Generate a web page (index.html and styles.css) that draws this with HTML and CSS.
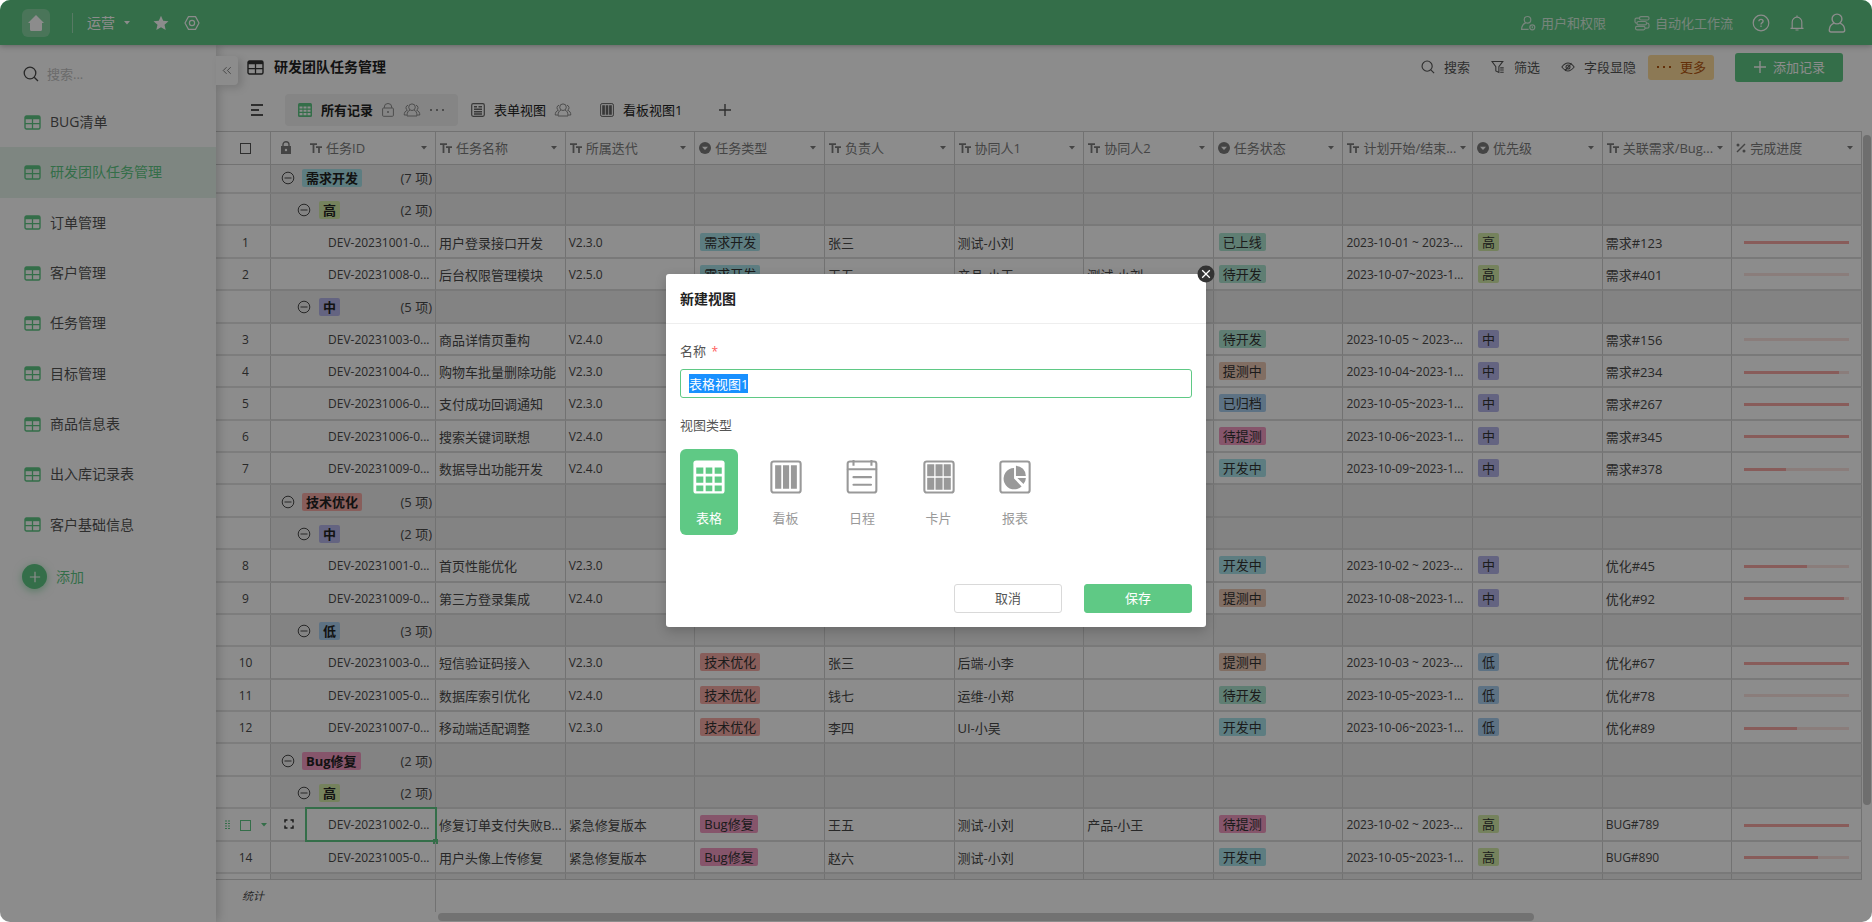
FILE: index.html
```html
<!DOCTYPE html>
<html lang="zh-CN">
<head>
<meta charset="utf-8">
<title>研发团队任务管理</title>
<link rel="stylesheet" href="styles.css">
</head>
<body>
<svg class="sprite" aria-hidden="true">
  <symbol id="i-table" viewBox="0 0 17 15"><rect x="1" y="1" width="15" height="13" rx="1.5" fill="none" stroke="currentColor" stroke-width="1.4"/><path d="M1 1h15v3.200H1z" fill="currentColor"/><path d="M8.500 4v10M1 8.700h15" stroke="currentColor" stroke-width="1.300"/></symbol>
  <symbol id="i-search" viewBox="0 0 16 16"><circle cx="7" cy="7" r="5.800" fill="none" stroke="currentColor" stroke-width="1.300"/><path d="M11.200 11.200L15 15" stroke="currentColor" stroke-width="1.300"/></symbol>
  <symbol id="i-home" viewBox="0 0 16 16"><path d="M8 0L0 8h2v6.500Q2 16 3.500 16h9q1.500 0 1.500-1.500V8h2z" fill="currentColor"/></symbol>
  <symbol id="i-star" viewBox="0 0 16 16"><path d="M8 .8l2.200 4.900 5.300.5-4 3.600 1.200 5.300L8 12.300l-4.700 2.800 1.200-5.300-4-3.600 5.300-.5z" fill="currentColor"/></symbol>
  <symbol id="i-hex" viewBox="0 0 16 16"><path d="M4.500 1.600h7L15 8l-3.500 6.400h-7L1 8z" fill="none" stroke="currentColor" stroke-width="1.200" stroke-linejoin="round"/><circle cx="8" cy="8" r="2.600" fill="none" stroke="currentColor" stroke-width="1.200"/></symbol>
  <symbol id="i-userlock" viewBox="0 0 16 16"><g fill="none" stroke="currentColor" stroke-width="1.200"><circle cx="7.500" cy="4.800" r="3.300"/><path d="M5.800 7.600C3.500 8.800 1.600 10.500 1.600 14.400h7"/><circle cx="12.300" cy="12.300" r="2.500"/><path d="M12.300 11.300v2"/></g></symbol>
  <symbol id="i-flow" viewBox="0 0 16 16"><g fill="none" stroke="currentColor" stroke-width="1.200"><rect x="5.500" y="1.600" width="9.500" height="3.400" rx="1.500"/><rect x="3" y="6.500" width="9.500" height="3.400" rx="1.500"/><rect x="1.500" y="11.400" width="9.500" height="3.400" rx="1.500"/><path d="M5.500 3.200H2.500q-1.500 0-1.500 1.500v2q0 1.500 2 1.500M12.500 8.200h.5q2 0 2 1.500v2q0 1.500-2 1.500h-2"/></g></symbol>
  <symbol id="i-help" viewBox="0 0 18 18"><circle cx="9" cy="9" r="7.800" fill="none" stroke="currentColor" stroke-width="1.200"/><path d="M6.900 7.300q0-2 2.100-2t2.100 1.900q0 1-1.200 1.700-.9.500-.9 1.600M9 11.600v1.400" fill="none" stroke="currentColor" stroke-width="1.300"/></symbol>
  <symbol id="i-bell" viewBox="0 0 16 16"><path d="M1.500 13.300h13M3.200 13.300V7a4.800 4.800 0 0 1 9.600 0v6.300M8 .5v1.700M6.500 15h3" fill="none" stroke="currentColor" stroke-width="1.200"/></symbol>
  <symbol id="i-person" viewBox="0 0 18 20"><g fill="none" stroke="currentColor" stroke-width="1.400"><circle cx="9" cy="6" r="4.900"/><path d="M6 10.200C3 11.300 1.500 13.500 1.300 17q0 2 1.700 2h12q1.700 0 1.700-2C16.500 13.500 15 11.300 12 10.200"/></g></symbol>
  <symbol id="i-collapse" viewBox="0 0 12 10"><path d="M5.500 1L1.500 5l4 4M10.500 1l-4 4 4 4" fill="none" stroke="currentColor" stroke-width="1.100"/></symbol>
  <symbol id="i-menu" viewBox="0 0 14 14"><path d="M1 2h12M1 7h8M1 12h12" stroke="currentColor" stroke-width="2"/></symbol>
  <symbol id="i-gridfill" viewBox="0 0 14 14"><rect width="14" height="14" rx="1.500" fill="currentColor"/><path d="M1.500 3.500h3v2h-3zM5.500 3.500h3v2h-3zM9.500 3.500h3v2h-3zM1.500 6.700h3v2h-3zM5.500 6.700h3v2h-3zM9.500 6.700h3v2h-3zM1.500 10h3v2.300h-3zM5.500 10h3v2.300h-3zM9.500 10h3v2.300h-3z" fill="#fff"/></symbol>
  <symbol id="i-lockline" viewBox="0 0 14 14"><rect x="1.600" y="5" width="10.800" height="8.300" rx="1" fill="none" stroke="currentColor"/><path d="M3.300 5V4a3.700 3.500 0 0 1 7.400 0v1" fill="none" stroke="currentColor"/><circle cx="7" cy="9" r="1" fill="currentColor"/></symbol>
  <symbol id="i-people" viewBox="0 0 18 14"><g fill="none" stroke="currentColor"><circle cx="9" cy="4.200" r="3.300"/><path d="M5 2.200a2.700 2.700 0 0 0-.6 5C2.200 8 1.200 9.600 1.200 12h2.500M13 2.200a2.700 2.700 0 0 1 .6 5c2.200.8 3.200 2.400 3.200 4.800h-2.500M7 7c-2 .8-3 2.500-3 6h10c0-3.500-1-5.200-3-6"/></g></symbol>
  <symbol id="i-dots" viewBox="0 0 16 4"><path d="M1 1h2v2H1zM7 1h2v2H7zM13 1h2v2h-2z" fill="currentColor"/></symbol>
  <symbol id="i-form" viewBox="0 0 14 14"><rect x=".7" y=".7" width="12.600" height="12.600" rx="1.500" fill="none" stroke="currentColor" stroke-width="1.200"/><path d="M3 3.700h3M7.500 3.700H11M3 6.200h8M3 8.700h8M3 11h8" stroke="currentColor" stroke-width="1.400"/></symbol>
  <symbol id="i-kanban" viewBox="0 0 14 14"><rect x=".6" y=".6" width="12.800" height="12.800" rx="1.500" fill="none" stroke="currentColor" stroke-width="1"/><path d="M2.200 2.200h2.700v9.600H2.200zM5.700 2.200h2.600v9.600H5.700zM9.100 2.200h2.700v9.600H9.100z" fill="currentColor"/></symbol>
  <symbol id="i-plus" viewBox="0 0 14 14"><path d="M7 1v12M1 7h12" stroke="currentColor" stroke-width="1.400"/></symbol>
  <symbol id="i-filter" viewBox="0 0 16 16"><path d="M1 1.600h12.500L9 7.500v6.800l-3.500-1.700V7.500zM10.500 9h4M10.500 11.500h4M10.500 14h4" fill="none" stroke="currentColor" stroke-width="1.200"/></symbol>
  <symbol id="i-eye" viewBox="0 0 16 14"><path d="M1 7q7-9 14 0-7 9-14 0zM4.500 11.500L12 2.500" fill="none" stroke="currentColor" stroke-width="1.200"/><circle cx="8" cy="7" r="2.300" fill="none" stroke="currentColor" stroke-width="1.200"/></symbol>
  <symbol id="i-lock" viewBox="0 0 12 14"><path d="M1 5h10v8H1z" fill="currentColor"/><path d="M3 5V3.500a3 2.800 0 0 1 6 0V5" fill="none" stroke="currentColor" stroke-width="1.400"/><circle cx="6" cy="9" r="1.200" fill="#fff"/></symbol>
  <symbol id="i-text" viewBox="0 0 12 10"><path d="M0 1.200h7M3.500 1.200V10M6 4.200h6M9 4.200V10" fill="none" stroke="currentColor" stroke-width="1.800"/></symbol>
  <symbol id="i-select" viewBox="0 0 12 12"><circle cx="6" cy="6" r="6" fill="currentColor"/><path d="M3 4.800h6L6 8z" fill="#fff"/></symbol>
  <symbol id="i-percent" viewBox="0 0 10 10"><path d="M9 1L1 9" stroke="currentColor" stroke-width="1.400"/><circle cx="2" cy="2" r="1.500" fill="currentColor"/><circle cx="8" cy="8" r="1.500" fill="currentColor"/></symbol>
  <symbol id="i-caret" viewBox="0 0 6 4"><path d="M0 0h6L3 3.500z" fill="currentColor"/></symbol>
  <symbol id="i-minus" viewBox="0 0 14 14"><circle cx="7" cy="7" r="5.800" fill="none" stroke="currentColor"/><path d="M3.500 7h7" stroke="currentColor"/></symbol>
  <symbol id="i-expand" viewBox="0 0 10 10"><path d="M1 3.500V1h2.500M6.500 1H9v2.500M9 6.500V9H6.500M3.500 9H1V6.500" fill="none" stroke="currentColor" stroke-width="1.500"/></symbol>
  <symbol id="i-drag" viewBox="0 0 5 10"><path d="M0 1h2M3 1h2M0 3.500h2M3 3.500h2M0 6h2M3 6h2M0 8.500h2M3 8.500h2" stroke="currentColor"/></symbol>
  <symbol id="i-close" viewBox="0 0 18 18"><circle cx="9" cy="9" r="8.500" fill="#333"/><path d="M5.200 5.200l7.600 7.600M12.800 5.200l-7.600 7.600" stroke="#fff" stroke-width="1.300"/></symbol>
  <symbol id="v-grid" viewBox="0 0 34 36"><rect x=".5" y=".5" width="33" height="35" rx="3" fill="currentColor"/><path d="M3.500 8h7.500v6.500H3.500zM13.500 8h7v6.500h-7zM23 8h7.500v6.500H23zM3.500 17.500h7.500V24H3.500zM13.500 17.500h7V24h-7zM23 17.500h7.500V24H23zM3.500 27h7.500v6H3.500zM13.500 27h7v6h-7zM23 27h7.500v6H23z" fill="#5fc985"/></symbol>
  <symbol id="v-kanban" viewBox="0 0 34 36"><rect x="1.500" y="1.500" width="31" height="33" rx="2.500" fill="none" stroke="currentColor" stroke-width="2.200"/><path d="M5.500 5.500h6.500v25H5.500zM13.800 5.500h6.500v25h-6.500zM22.200 5.500h6.300v25h-6.300z" fill="currentColor"/></symbol>
  <symbol id="v-cal" viewBox="0 0 34 36"><rect x="1.800" y="1.500" width="30.400" height="33" rx="2.500" fill="none" stroke="currentColor" stroke-width="2.200"/><path d="M2 9.800h30M8 18.200h18.500M8 26.200h18.500" fill="none" stroke="currentColor" stroke-width="2.300" stroke-linecap="round"/><path d="M8 0v6M27 0v6" stroke="currentColor" stroke-width="2.200"/></symbol>
  <symbol id="v-card" viewBox="0 0 34 36"><rect x="1.500" y="1.500" width="31" height="33" rx="2.500" fill="none" stroke="currentColor" stroke-width="2.200"/><path d="M4.500 4.500h7.500v12.800H4.500zM13.300 4.500h7.500v12.800h-7.500zM22 4.500h7.500v12.800H22zM4.500 18.700h7.500v12.800H4.500zM13.300 18.700h7.500v12.800h-7.500zM22 18.700h7.500v12.800H22z" fill="currentColor"/></symbol>
  <symbol id="v-chart" viewBox="0 0 34 36"><rect x="1.500" y="1.500" width="31" height="33" rx="2.500" fill="none" stroke="currentColor" stroke-width="2.200"/><path d="M16 8.500A11.300 11.300 0 1 0 24 28L16 19.500z" fill="currentColor"/><path d="M18 6v11h10.500A11 11 0 0 0 18 6zM19.500 19L26 25.500Q28.500 22.500 28.500 19z" fill="currentColor"/></symbol>
</svg>

<div class="app">
  <header class="topbar">
    <button class="home" aria-label="首页"><svg class="s16"><use href="#i-home"/></svg></button>
    <span class="topbar-divider"></span>
    <button class="app-name">运营 <svg class="caret"><use href="#i-caret"/></svg></button>
    <button aria-label="收藏"><svg class="s16"><use href="#i-star"/></svg></button>
    <button class="gear" aria-label="设置"><svg class="s16"><use href="#i-hex"/></svg></button>
    <div class="topbar-right">
      <button class="soft"><svg class="s16"><use href="#i-userlock"/></svg>用户和权限</button>
      <button class="soft flow"><svg class="s16"><use href="#i-flow"/></svg>自动化工作流</button>
      <button aria-label="帮助"><svg class="s18"><use href="#i-help"/></svg></button>
      <button class="bell" aria-label="通知"><svg class="s16"><use href="#i-bell"/></svg></button>
      <button class="me" aria-label="个人中心"><svg class="s20"><use href="#i-person"/></svg></button>
    </div>
  </header>

  <div class="body">
    <aside class="sidebar">
      <label class="side-search"><svg class="s16"><use href="#i-search"/></svg><input type="text" placeholder="搜索..." aria-label="搜索"></label>
      <nav>
        <a href="#"><svg class="tbl"><use href="#i-table"/></svg>BUG清单</a>
        <a href="#" class="on"><svg class="tbl"><use href="#i-table"/></svg>研发团队任务管理</a>
        <a href="#"><svg class="tbl"><use href="#i-table"/></svg>订单管理</a>
        <a href="#"><svg class="tbl"><use href="#i-table"/></svg>客户管理</a>
        <a href="#"><svg class="tbl"><use href="#i-table"/></svg>任务管理</a>
        <a href="#"><svg class="tbl"><use href="#i-table"/></svg>目标管理</a>
        <a href="#"><svg class="tbl"><use href="#i-table"/></svg>商品信息表</a>
        <a href="#"><svg class="tbl"><use href="#i-table"/></svg>出入库记录表</a>
        <a href="#"><svg class="tbl"><use href="#i-table"/></svg>客户基础信息</a>
      </nav>
      <button class="side-add"><span class="side-plus"><svg class="s12"><use href="#i-plus"/></svg></span>添加</button>
      <button class="collapse" aria-label="收起"><svg><use href="#i-collapse"/></svg></button>
    </aside>

    <main class="main">
      <div class="titlebar">
        <svg class="tbl"><use href="#i-table"/></svg>
        <h1>研发团队任务管理</h1>
        <div class="tools">
          <button><svg class="s14"><use href="#i-search"/></svg>搜索</button>
          <button><svg class="s14"><use href="#i-filter"/></svg>筛选</button>
          <button class="fields"><svg class="s14"><use href="#i-eye"/></svg>字段显隐</button>
          <button class="more"><svg class="dots"><use href="#i-dots"/></svg>更多</button>
          <button class="add"><svg class="s14"><use href="#i-plus"/></svg>添加记录</button>
        </div>
      </div>

      <div class="tabs">
        <button class="menu" aria-label="视图列表"><svg class="s14"><use href="#i-menu"/></svg></button>
        <button class="tab on"><svg class="s14 green"><use href="#i-gridfill"/></svg><span>所有记录</span><svg class="s14 faint"><use href="#i-lockline"/></svg><svg class="people faint"><use href="#i-people"/></svg><svg class="dots faint"><use href="#i-dots"/></svg></button>
        <button class="tab"><svg class="s14"><use href="#i-form"/></svg><span>表单视图</span><svg class="people faint"><use href="#i-people"/></svg></button>
        <button class="tab third"><svg class="s14"><use href="#i-kanban"/></svg><span>看板视图1</span></button>
        <button class="newtab" aria-label="新建视图"><svg class="s14"><use href="#i-plus"/></svg></button>
      </div>

      <div class="sheet">
        <div class="rows">
          <table>
            <colgroup><col class="c-num"><col class="c-id"><col span="11"></colgroup>
            <thead>
              <tr>
                <th class="num"><input type="checkbox" aria-label="全选"></th>
                <th><div class="h h-id"><svg class="lock"><use href="#i-lock"/></svg><svg class="tt"><use href="#i-text"/></svg>任务ID<svg class="caret"><use href="#i-caret"/></svg></div></th>
                <th><div class="h"><svg class="tt"><use href="#i-text"/></svg>任务名称<svg class="caret"><use href="#i-caret"/></svg></div></th>
                <th><div class="h"><svg class="tt"><use href="#i-text"/></svg>所属迭代<svg class="caret"><use href="#i-caret"/></svg></div></th>
                <th><div class="h"><svg class="s12"><use href="#i-select"/></svg>任务类型<svg class="caret"><use href="#i-caret"/></svg></div></th>
                <th><div class="h"><svg class="tt"><use href="#i-text"/></svg>负责人<svg class="caret"><use href="#i-caret"/></svg></div></th>
                <th><div class="h"><svg class="tt"><use href="#i-text"/></svg>协同人1<svg class="caret"><use href="#i-caret"/></svg></div></th>
                <th><div class="h"><svg class="tt"><use href="#i-text"/></svg>协同人2<svg class="caret"><use href="#i-caret"/></svg></div></th>
                <th><div class="h"><svg class="s12"><use href="#i-select"/></svg>任务状态<svg class="caret"><use href="#i-caret"/></svg></div></th>
                <th><div class="h"><svg class="tt"><use href="#i-text"/></svg>计划开始/结束...<svg class="caret"><use href="#i-caret"/></svg></div></th>
                <th><div class="h"><svg class="s12"><use href="#i-select"/></svg>优先级<svg class="caret"><use href="#i-caret"/></svg></div></th>
                <th><div class="h"><svg class="tt"><use href="#i-text"/></svg>关联需求/Bug...<svg class="caret"><use href="#i-caret"/></svg></div></th>
                <th><div class="h"><svg class="s10"><use href="#i-percent"/></svg>完成进度<svg class="caret"><use href="#i-caret"/></svg></div></th>
              </tr>
            </thead>
            <tbody>
              <tr class="group first"><td class="num"></td><td><div class="g"><svg class="s14"><use href="#i-minus"/></svg><b class="tag cyan">需求开发</b><span>(7 项)</span></div></td><td></td><td></td><td></td><td></td><td></td><td></td><td></td><td></td><td></td><td></td><td></td></tr>
              <tr class="group"><td class="num"></td><td><div class="g sub"><svg class="s14"><use href="#i-minus"/></svg><b class="tag lime">高</b><span>(2 项)</span></div></td><td></td><td></td><td></td><td></td><td></td><td></td><td></td><td></td><td></td><td></td><td></td></tr>
              <tr><td class="num">1</td><td class="id">DEV-20231001-0...</td><td>用户登录接口开发</td><td class="lat">V2.3.0</td><td><span class="tag cyan">需求开发</span></td><td>张三</td><td>测试-小刘</td><td></td><td><span class="tag mint">已上线</span></td><td class="lat">2023-10-01 ~ 2023-...</td><td><span class="tag lime">高</span></td><td>需求#123</td><td><div class="bar"><i style="width:100%"></i></div></td></tr>
              <tr><td class="num">2</td><td class="id">DEV-20231008-0...</td><td>后台权限管理模块</td><td class="lat">V2.5.0</td><td><span class="tag cyan">需求开发</span></td><td>王五</td><td>产品-小王</td><td>测试-小刘</td><td><span class="tag mint">待开发</span></td><td class="lat">2023-10-07~2023-1...</td><td><span class="tag lime">高</span></td><td>需求#401</td><td><div class="bar"><i style="width:0%"></i></div></td></tr>
              <tr class="group"><td class="num"></td><td><div class="g sub"><svg class="s14"><use href="#i-minus"/></svg><b class="tag violet">中</b><span>(5 项)</span></div></td><td></td><td></td><td></td><td></td><td></td><td></td><td></td><td></td><td></td><td></td><td></td></tr>
              <tr><td class="num">3</td><td class="id">DEV-20231003-0...</td><td>商品详情页重构</td><td class="lat">V2.4.0</td><td></td><td></td><td></td><td></td><td><span class="tag mint">待开发</span></td><td class="lat">2023-10-05 ~ 2023-...</td><td><span class="tag violet">中</span></td><td>需求#156</td><td><div class="bar"><i style="width:0%"></i></div></td></tr>
              <tr><td class="num">4</td><td class="id">DEV-20231004-0...</td><td>购物车批量删除功能</td><td class="lat">V2.3.0</td><td></td><td></td><td></td><td></td><td><span class="tag sand">提测中</span></td><td class="lat">2023-10-04~2023-1...</td><td><span class="tag violet">中</span></td><td>需求#234</td><td><div class="bar"><i style="width:90%"></i></div></td></tr>
              <tr><td class="num">5</td><td class="id">DEV-20231006-0...</td><td>支付成功回调通知</td><td class="lat">V2.3.0</td><td></td><td></td><td></td><td></td><td><span class="tag blue">已归档</span></td><td class="lat">2023-10-05~2023-1...</td><td><span class="tag violet">中</span></td><td>需求#267</td><td><div class="bar"><i style="width:100%"></i></div></td></tr>
              <tr><td class="num">6</td><td class="id">DEV-20231006-0...</td><td>搜索关键词联想</td><td class="lat">V2.4.0</td><td></td><td></td><td></td><td></td><td><span class="tag pink">待提测</span></td><td class="lat">2023-10-06~2023-1...</td><td><span class="tag violet">中</span></td><td>需求#345</td><td><div class="bar"><i style="width:100%"></i></div></td></tr>
              <tr><td class="num">7</td><td class="id">DEV-20231009-0...</td><td>数据导出功能开发</td><td class="lat">V2.4.0</td><td></td><td></td><td></td><td></td><td><span class="tag cyan">开发中</span></td><td class="lat">2023-10-09~2023-1...</td><td><span class="tag violet">中</span></td><td>需求#378</td><td><div class="bar"><i style="width:40%"></i></div></td></tr>
              <tr class="group"><td class="num"></td><td><div class="g"><svg class="s14"><use href="#i-minus"/></svg><b class="tag red">技术优化</b><span>(5 项)</span></div></td><td></td><td></td><td></td><td></td><td></td><td></td><td></td><td></td><td></td><td></td><td></td></tr>
              <tr class="group"><td class="num"></td><td><div class="g sub"><svg class="s14"><use href="#i-minus"/></svg><b class="tag violet">中</b><span>(2 项)</span></div></td><td></td><td></td><td></td><td></td><td></td><td></td><td></td><td></td><td></td><td></td><td></td></tr>
              <tr><td class="num">8</td><td class="id">DEV-20231001-0...</td><td>首页性能优化</td><td class="lat">V2.3.0</td><td></td><td></td><td></td><td></td><td><span class="tag cyan">开发中</span></td><td class="lat">2023-10-02 ~ 2023-...</td><td><span class="tag violet">中</span></td><td>优化#45</td><td><div class="bar"><i style="width:60%"></i></div></td></tr>
              <tr><td class="num">9</td><td class="id">DEV-20231009-0...</td><td>第三方登录集成</td><td class="lat">V2.4.0</td><td></td><td></td><td></td><td></td><td><span class="tag sand">提测中</span></td><td class="lat">2023-10-08~2023-1...</td><td><span class="tag violet">中</span></td><td>优化#92</td><td><div class="bar"><i style="width:95%"></i></div></td></tr>
              <tr class="group"><td class="num"></td><td><div class="g sub"><svg class="s14"><use href="#i-minus"/></svg><b class="tag blue">低</b><span>(3 项)</span></div></td><td></td><td></td><td></td><td></td><td></td><td></td><td></td><td></td><td></td><td></td><td></td></tr>
              <tr><td class="num">10</td><td class="id">DEV-20231003-0...</td><td>短信验证码接入</td><td class="lat">V2.3.0</td><td><span class="tag red">技术优化</span></td><td>张三</td><td>后端-小李</td><td></td><td><span class="tag sand">提测中</span></td><td class="lat">2023-10-03 ~ 2023-...</td><td><span class="tag blue">低</span></td><td>优化#67</td><td><div class="bar"><i style="width:100%"></i></div></td></tr>
              <tr><td class="num">11</td><td class="id">DEV-20231005-0...</td><td>数据库索引优化</td><td class="lat">V2.4.0</td><td><span class="tag red">技术优化</span></td><td>钱七</td><td>运维-小郑</td><td></td><td><span class="tag mint">待开发</span></td><td class="lat">2023-10-05~2023-1...</td><td><span class="tag blue">低</span></td><td>优化#78</td><td><div class="bar"><i style="width:0%"></i></div></td></tr>
              <tr><td class="num">12</td><td class="id">DEV-20231007-0...</td><td>移动端适配调整</td><td class="lat">V2.3.0</td><td><span class="tag red">技术优化</span></td><td>李四</td><td>UI-小吴</td><td></td><td><span class="tag cyan">开发中</span></td><td class="lat">2023-10-06~2023-1...</td><td><span class="tag blue">低</span></td><td>优化#89</td><td><div class="bar"><i style="width:50%"></i></div></td></tr>
              <tr class="group"><td class="num"></td><td><div class="g"><svg class="s14"><use href="#i-minus"/></svg><b class="tag pink">Bug修复</b><span>(2 项)</span></div></td><td></td><td></td><td></td><td></td><td></td><td></td><td></td><td></td><td></td><td></td><td></td></tr>
              <tr class="group"><td class="num"></td><td><div class="g sub"><svg class="s14"><use href="#i-minus"/></svg><b class="tag lime">高</b><span>(2 项)</span></div></td><td></td><td></td><td></td><td></td><td></td><td></td><td></td><td></td><td></td><td></td><td></td></tr>
              <tr><td class="num"><div class="rowtools"><svg class="drag"><use href="#i-drag"/></svg><input type="checkbox" aria-label="选择记录"><svg class="caret"><use href="#i-caret"/></svg></div></td><td class="id picked"><svg class="s10"><use href="#i-expand"/></svg>DEV-20231002-0...</td><td>修复订单支付失败B...</td><td>紧急修复版本</td><td><span class="tag pink">Bug修复</span></td><td>王五</td><td>测试-小刘</td><td>产品-小王</td><td><span class="tag pink">待提测</span></td><td class="lat">2023-10-02 ~ 2023-...</td><td><span class="tag lime">高</span></td><td class="lat">BUG#789</td><td><div class="bar"><i style="width:100%"></i></div></td></tr>
              <tr><td class="num">14</td><td class="id">DEV-20231005-0...</td><td>用户头像上传修复</td><td>紧急修复版本</td><td><span class="tag pink">Bug修复</span></td><td>赵六</td><td>测试-小刘</td><td></td><td><span class="tag cyan">开发中</span></td><td class="lat">2023-10-05~2023-1...</td><td><span class="tag lime">高</span></td><td class="lat">BUG#890</td><td><div class="bar"><i style="width:70%"></i></div></td></tr>
              <tr class="group last"><td class="num"></td><td></td><td></td><td></td><td></td><td></td><td></td><td></td><td></td><td></td><td></td><td></td><td></td></tr>
            </tbody>
          </table>
          <div class="vtrack"><div class="vthumb"></div></div>
        </div>
        <div class="summary">
          <div class="summary-label">统计</div>
          <div class="htrack"><div class="hthumb"></div></div>
        </div>
      </div>
    </main>
  </div>

  <div class="overlay">
    <form class="modal" role="dialog" aria-labelledby="dlg-title">
      <button type="button" class="close" aria-label="关闭"><svg class="s18"><use href="#i-close"/></svg></button>
      <h2 id="dlg-title">新建视图</h2>
      <div class="modal-body">
        <label for="view-name">名称 <span class="req">*</span></label>
        <input id="view-name" type="text" value="表格视图1" autocomplete="off">
        <fieldset>
          <legend>视图类型</legend>
          <div class="types">
            <label><input type="radio" name="type" checked><svg><use href="#v-grid"/></svg>表格</label>
            <label><input type="radio" name="type"><svg><use href="#v-kanban"/></svg>看板</label>
            <label><input type="radio" name="type"><svg><use href="#v-cal"/></svg>日程</label>
            <label><input type="radio" name="type"><svg><use href="#v-card"/></svg>卡片</label>
            <label><input type="radio" name="type"><svg><use href="#v-chart"/></svg>报表</label>
          </div>
        </fieldset>
      </div>
      <div class="actions">
        <button type="button">取消</button>
        <button type="submit" class="save">保存</button>
      </div>
    </form>
  </div>
</div>
<script src="script.js"></script>
</body>
</html>
```

FILE: styles.css
```css
:root {
  --green: #5fc985;
  --line: #cfcfcf;
  --row-line: #dcdcdc;
}
* { box-sizing: border-box; }
body {
  margin: 0;
  background: #fff;
  font: 13px/18px "Open Sans", "Noto Sans CJK SC", sans-serif;
  color: #4a4a4a;
}
button, input {
  font: inherit;
  color: inherit;
  border: 0;
  background: none;
  padding: 0;
  margin: 0;
}
button { display: flex; align-items: center; }
a { color: inherit; text-decoration: none; }
svg { flex: none; display: block; }
.sprite { position: absolute; width: 0; height: 0; }
.s10 { width: 10px; height: 10px; }
.s12 { width: 12px; height: 12px; }
.s14 { width: 14px; height: 14px; }
.s16 { width: 16px; height: 16px; }
.s18 { width: 18px; height: 18px; }
.s20 { width: 20px; height: 20px; }
.tbl { width: 17px; height: 15px; }
.caret { width: 6px; height: 4px; }
.dots { width: 16px; height: 4px; }
.people { width: 18px; height: 14px; }
.green { color: var(--green); }
.faint { color: #8c8c8c; }

.app {
  position: relative;
  display: flex;
  flex-direction: column;
  height: 100vh;
  border-radius: 10px;
  overflow: hidden;
}

/* Top bar */
.topbar {
  display: flex;
  align-items: center;
  flex: none;
  height: 45px;
  padding: 0 25px 0 22px;
  background: var(--green);
  color: #fff;
  box-shadow: 0 1px 6px rgba(0, 0, 0, .3);
  z-index: 2;
}
.home {
  width: 28px;
  height: 28px;
  justify-content: center;
  border-radius: 6px;
  background: rgba(255, 255, 255, .25);
}
.topbar-divider {
  width: 1px;
  height: 20px;
  margin: 0 14px 0 22px;
  background: rgba(255, 255, 255, .4);
}
.app-name { font-size: 14px; gap: 9px; margin-right: 23px; }
.gear { margin-left: 15px; }
.topbar-right { display: flex; align-items: center; margin-left: auto; }
.topbar-right button { gap: 5px; }
.topbar-right .soft { opacity: .75; }
.topbar-right .flow { margin: 0 19px 0 28px; }
.topbar-right .bell { margin: 0 22px 0 19px; }

.body { display: flex; flex: 1; min-height: 0; }

/* Sidebar */
.sidebar {
  position: relative;
  flex: none;
  width: 216px;
  background: #fff;
  box-shadow: 2px 0 10px rgba(0, 0, 0, .2);
  font-size: 14px;
  z-index: 1;
}
.side-search {
  display: flex;
  align-items: center;
  gap: 8px;
  height: 52px;
  padding: 6px 10px 0 23px;
}
.side-search input { width: 140px; font-size: 13px; }
.side-search input::placeholder { color: #c4c4c4; opacity: 1; }
.sidebar nav { display: grid; grid-auto-rows: 1fr; min-height: 453px; }
.sidebar nav a {
  display: flex;
  align-items: center;
  gap: 9px;
  padding-left: 24px;
  color: #555;
}
.sidebar nav svg { color: var(--green); }
.sidebar nav .on { color: var(--green); background: #e6f5ec; }
.side-add { gap: 9px; margin: 14px 0 0 22px; color: var(--green); }
.side-plus {
  display: flex;
  align-items: center;
  justify-content: center;
  width: 25px;
  height: 25px;
  border-radius: 50%;
  color: #fff;
  background: var(--green);
  box-shadow: 0 2px 8px rgba(95, 201, 133, .6);
}
.collapse {
  position: absolute;
  left: 100%;
  top: 11px;
  width: 22px;
  height: 29px;
  justify-content: center;
  color: #777;
  background: #fff;
  border-radius: 0 4px 4px 0;
  box-shadow: 4px 3px 8px rgba(0, 0, 0, .15);
}
.collapse svg { width: 10px; height: 9px; }

/* Title row and tools */
.main { flex: 1; min-width: 0; display: flex; flex-direction: column; background: #fff; }
.titlebar {
  display: flex;
  align-items: center;
  gap: 10px;
  height: 44px;
  padding: 0 29px 0 31px;
  color: #333;
}
.titlebar h1 { margin: 0; font-size: 14px; font-weight: 700; color: #222; }
.tools { display: flex; align-items: center; gap: 21px; margin-left: auto; color: #555; }
.tools button { gap: 9px; }
.tools .fields { margin-right: -9px; }
.tools .more {
  height: 25px;
  padding: 0 8px;
  gap: 8px;
  border-radius: 3px;
  color: #b4560f;
  background: #ffdc9c;
}
.tools .add {
  width: 108px;
  height: 29px;
  gap: 6px;
  justify-content: center;
  border-radius: 3px;
  color: #fff;
  background: var(--green);
}

/* View tabs */
.tabs { display: flex; align-items: center; height: 42px; padding: 0 34px; color: #333; }
.menu { margin-right: 21px; color: #555; }
.tab { height: 32px; padding: 0 13px; gap: 8px; border-radius: 4px; color: #222; }
.tab > svg:first-child { margin-right: 1px; color: #666; }
.tab > svg.green:first-child { color: var(--green); }
.tab.on { background: #f3f3f3; font-weight: 700; }
.tab.third { padding-left: 15px; }
.newtab { margin-left: 23px; color: #555; }

/* Sheet */
.sheet { flex: 1; min-height: 0; display: flex; flex-direction: column; }
.rows { flex: 1; min-height: 0; display: flex; overflow: hidden; }
table {
  flex: 1;
  width: 100%;
  height: 100%;
  table-layout: fixed;
  border-collapse: separate;
  border-spacing: 0;
  border-top: 1px solid var(--line);
}
.c-num { width: 55px; }
.c-id { width: 165px; }
th, td {
  padding: 0 0 0 4px;
  text-align: left;
  white-space: nowrap;
  overflow: hidden;
  vertical-align: middle;
  border-right: 1px solid var(--line);
  border-bottom: 2px solid var(--row-line);
}
td { padding: 2px 0 0 3px; }
td:nth-child(5), td:nth-child(9), td:nth-child(11) { padding: 0 0 0 5px; }
th { height: 33px; font-weight: 400; color: #7d7d7d; border-bottom: 1px solid var(--line); }
.h { display: flex; align-items: center; gap: 4px; padding-right: 8px; }
.h .caret { margin-left: auto; }
.h-id .lock { margin: 0 14px 0 5px; }
.lock { width: 12px; height: 14px; }
.tt { width: 12px; height: 10px; }
.num { text-align: center; font-size: 12px; }
th.num { padding: 0; }
td.num { padding: 2px 0 0 5px; border-bottom-color: #e4e4e4; }
.group td { background: #eee; }
.group td.num { background: #fff; }
.first td { height: 29px; padding-top: 0; padding-bottom: 2px; }
.last td { height: 5px; padding: 0; border-bottom: 0; }
.g { display: flex; align-items: center; padding: 0 3px 0 7px; gap: 7px; }
.g.sub { padding-left: 23px; gap: 8px; }
.g span { margin-left: auto; }
.lat { font-size: 12px; }
td.id { position: relative; padding: 2px 3px 0 57px; font-size: 12px; overflow: visible; }
.picked::before {
  content: "";
  position: absolute;
  inset: -2px -2px -2px 34px;
  border: 2px solid var(--green);
}
.picked::after {
  content: "";
  position: absolute;
  right: -3px;
  bottom: -4px;
  width: 5px;
  height: 5px;
  background: var(--green);
}
.picked svg { position: absolute; left: 13px; top: 10px; color: #333; }
input[type="checkbox"] {
  appearance: none;
  display: block;
  width: 11px;
  height: 11px;
  margin: 0 auto;
  border: 1px solid #555;
}
th.num input { margin-left: 24px; }
.rowtools { display: flex; align-items: center; gap: 10px; padding-left: 4px; color: var(--green); }
.rowtools input[type="checkbox"] { margin: 0; border-color: var(--green); }
.drag { width: 5px; height: 10px; }

.tag {
  display: inline-block;
  padding: 0 4px;
  border-radius: 2px;
  line-height: 18px;
  color: #333;
}
b.tag { color: #222; }
.cyan { background: #a9e4eb; }
.lime { background: #d5eda9; }
.violet { background: #b7b7eb; }
.red { background: #f8aca6; }
.blue { background: #a9cff0; }
.pink { background: #f59bc4; }
.mint { background: #aee6d2; }
.sand { background: #ecc8b4; }

.bar { height: 3px; margin: 0 12px 0 9px; background: #fce4e0; }
.bar i { display: block; height: 100%; background: #f8a8a4; }

.vtrack { flex: none; width: 10px; padding: 4px 1px 0; }
.vthumb { width: 8px; height: 90%; border-radius: 4px; background: #c8c8c8; }
.summary { flex: none; display: flex; height: 43px; }
.summary-label {
  flex: none;
  width: 220px;
  height: 33px;
  padding-left: 26px;
  border-top: 1px solid var(--line);
  border-right: 1px solid var(--line);
  font-size: 11px;
  line-height: 32px;
  font-style: italic;
}
.htrack { flex: 1; padding: 33px 0 0 2px; border-top: 1px solid var(--line); margin-right: 10px; }
.hthumb { width: 77%; height: 8px; border-radius: 4px; background: #d0d0d0; }

/* Dialog */
.overlay {
  position: absolute;
  inset: 0;
  z-index: 10;
  display: flex;
  align-items: center;
  justify-content: center;
  padding-bottom: 22px;
  background: rgba(0, 0, 0, .45);
}
.modal {
  position: relative;
  width: 540px;
  border-radius: 3px;
  background: #fff;
  box-shadow: 0 4px 12px rgba(0, 0, 0, .2);
  color: #555;
}
.close { position: absolute; top: -9px; right: -9px; }
.modal h2 {
  margin: 0;
  padding: 16px 14px 15px;
  border-bottom: 1px solid #eee;
  font-size: 14px;
  line-height: 18px;
  color: #222;
}
.modal-body { padding: 18px 14px 0; }
.modal-body > label { display: block; margin-bottom: 8px; }
.req { padding-left: 2px; font-size: 12px; color: #ff5c5c; }
#view-name {
  display: block;
  width: 100%;
  height: 29px;
  padding: 0 8px;
  border: 1px solid var(--green);
  border-radius: 3px;
  outline: 0;
}
#view-name::selection { color: #fff; background: #1890ff; }
fieldset { margin: 18px 0 0; padding: 0; border: 0; }
legend { padding: 0; }
.types { display: flex; justify-content: space-between; max-width: 364px; padding-top: 15px; }
.types label {
  display: flex;
  flex-direction: column;
  align-items: center;
  gap: 15px;
  width: 58px;
  height: 86px;
  padding-top: 11px;
  border-radius: 6px;
  color: #999;
}
.types label:has(:checked) { color: #fff; background: var(--green); }
.types input { position: absolute; opacity: 0; }
.types svg { width: 34px; height: 34px; }
.actions { display: flex; justify-content: flex-end; gap: 22px; padding: 49px 14px 14px; }
.actions button {
  width: 108px;
  height: 29px;
  justify-content: center;
  border: 1px solid #d9d9d9;
  border-radius: 3px;
}
.actions .save { color: #fff; border-color: var(--green); background: var(--green); }
```

FILE: script.js
```js
// Focus the name field with its default name selected.
document.getElementById("view-name").select();
```
